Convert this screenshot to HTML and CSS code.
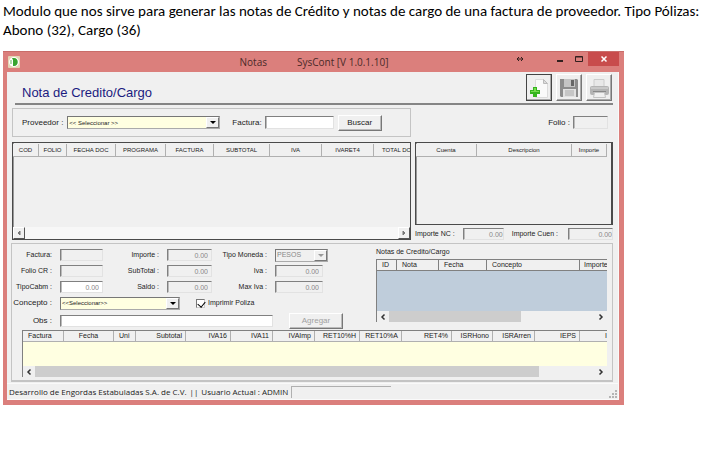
FILE: index.html
```html
<!DOCTYPE html>
<html lang="es">
<head>
<meta charset="utf-8">
<title>Notas - SysCont</title>
<link rel="stylesheet" href="styles.css">
</head>
<body>
<p class="intro">Modulo que nos sirve para generar las notas de Crédito y notas de cargo de una factura de proveedor. Tipo Pólizas: Abono (32), Cargo (36)</p>

<main class="window">
  <header class="titlebar">
    <svg class="app-icon" viewBox="0 0 12 12" aria-hidden="true"><rect width="12" height="12" rx="1" fill="#e5d5b5"/><circle cx="6" cy="6" r="5" fill="#fff"/><path d="M4 2h2c5 0 5 8 0 8H5V4z" fill="#37a52f"/><path d="M3 4v4" stroke="#65b85c"/></svg>
    <span class="caption"><span>Notas</span><span>SysCont [V 1.0.1.10]</span></span>
    <svg class="resize-icon" viewBox="0 0 8 6" aria-hidden="true"><path d="M1 3h6M3 1L1 3l2 2M5 1l2 2-2 2" fill="none" stroke="#33201f"/></svg>
    <button class="win-btn" aria-label="Minimizar"><svg viewBox="0 0 8 8"><path d="M1 6h6" stroke="#33201f" stroke-width="2"/></svg></button>
    <button class="win-btn" aria-label="Maximizar"><svg viewBox="0 0 8 8"><path d="M.5 1.5h7v5h-7zM.5 2h7" fill="none" stroke="#33201f"/></svg></button>
    <button class="win-btn close" aria-label="Cerrar"><svg viewBox="0 0 8 8"><path d="M1.500 1.500l5 5M6.500 1.500l-5 5" stroke="#fff" stroke-width="1.500"/></svg></button>
  </header>

  <div class="client">
    <div class="heading">
      <h1>Nota de Credito/Cargo</h1>
      <div class="tools">
        <button class="tool active" aria-label="Nuevo"><svg viewBox="0 0 22 22"><path d="M7.500 2.500h8l4 4v14h-12z" fill="#fafafa" stroke="#dcdcdc"/><path d="M15.500 2.500v4h4z" fill="#ddd" stroke="#bbb"/><path d="M5 10h4v3h3v4H9v3H5v-3H2v-4h3z" fill="#35b51e"/><path d="M6 11h2v3h3v1H3v-1h3z" fill="#75dc4c"/></svg></button>
        <button class="tool" aria-label="Guardar"><svg viewBox="0 0 22 22"><path d="M2 2h17l1 1v17H3l-1-1z" fill="#8c8c8c"/><path d="M6 2h11v8H6z" fill="#c4c4c4"/><path d="M13 3h3v6h-3z" fill="#666"/><path d="M5 12h13v8H5z" fill="#e2e2e2"/><path d="M7 14h9M7 16h9M7 18h9" stroke="#aaa"/></svg></button>
        <button class="tool" aria-label="Imprimir"><svg viewBox="0 0 22 22"><path d="M6 2.500h10v7H6z" fill="#e8e8e8" stroke="#ccc"/><rect x="2" y="9" width="19" height="9" rx="2" fill="#b4b4b4"/><path d="M3 11h17" stroke="#ddd"/><path d="M5 14h13v1H5z" fill="#888"/><path d="M6.500 15.500h10l1 5h-12z" fill="#f0f0f0" stroke="#c4c4c4"/></svg></button>
      </div>
    </div>

    <div class="search-row">
      <form class="search">
        <label for="prov">Proveedor :</label>
        <span class="combo yellow prov"><select id="prov"><option>&lt;&lt; Seleccionar &gt;&gt;</option></select></span>
        <label for="fact">Factura:</label>
        <input class="field white" id="fact" type="text">
        <button class="btn" type="button">Buscar</button>
      </form>
      <div class="folio">
        <label for="folio">Folio :</label>
        <input class="field" id="folio" type="text">
      </div>
    </div>

    <div class="grids">
      <section class="grid-box docs">
        <table class="caps">
          <colgroup><col class="w26"><col class="w28"><col class="w49"><col class="w50"><col class="w48"><col class="w56"><col class="w52"><col class="w52"><col></colgroup>
          <thead><tr><th>COD</th><th>FOLIO</th><th>FECHA DOC</th><th>PROGRAMA</th><th>FACTURA</th><th>SUBTOTAL</th><th>IVA</th><th>IVARET4</th><th class="cut">TOTAL DO</th></tr></thead>
        </table>
        <div class="scroll classic"><button type="button" aria-label="Izquierda"><svg viewBox="0 0 6 6"><path d="M4 1L2 3l2 2z" fill="#777" stroke="#777"/></svg></button><button type="button" aria-label="Derecha"><svg viewBox="0 0 6 6"><path d="M2 1l2 2-2 2z" fill="#777" stroke="#777"/></svg></button></div>
      </section>
      <section class="accounts">
        <div class="grid-box acc">
          <table class="caps">
            <colgroup><col class="w61"><col><col class="w35"></colgroup>
            <thead><tr><th>Cuenta</th><th>Descripcion</th><th>Importe</th></tr></thead>
          </table>
        </div>
        <div class="totals">
          <label for="inc">Importe NC :</label><input class="field" id="inc" type="text" value="0.00">
          <label for="icu">Importe Cuen :</label><input class="field" id="icu" type="text" value="0.00">
        </div>
      </section>
    </div>

    <section class="detail">
      <div class="detail-top">
        <form class="fields">
          <label for="f1">Factura:</label><input class="field" id="f1" type="text">
          <label for="f2">Importe :</label><input class="field" id="f2" type="text" value="0.00">
          <label for="f3">Tipo Moneda :</label><span class="combo muted"><select id="f3"><option>PESOS</option></select></span>
          <label for="f4">Folio CR :</label><input class="field" id="f4" type="text">
          <label for="f5">SubTotal :</label><input class="field" id="f5" type="text" value="0.00">
          <label for="f6">Iva :</label><input class="field short" id="f6" type="text" value="0.00">
          <label for="f7">TipoCabm :</label><input class="field white" id="f7" type="text" value="0.00">
          <label for="f8">Saldo :</label><input class="field" id="f8" type="text" value="0.00">
          <label for="f9">Max Iva :</label><input class="field short" id="f9" type="text" value="0.00">
          <label class="big" for="con">Concepto :</label>
          <div class="wide">
            <span class="combo yellow concept"><select id="con"><option>&lt;&lt;Seleccionar&gt;&gt;</option></select></span>
            <label class="check"><input type="checkbox" checked>Imprimir Poliza</label>
          </div>
          <label class="big" for="obs">Obs :</label>
          <div class="wide obs">
            <input class="field white" id="obs" type="text">
            <button class="btn off" type="button">Agregar</button>
          </div>
        </form>
        <section class="notes">
          <h2>Notas de Credito/Cargo</h2>
          <div class="list blue">
            <table>
              <colgroup><col class="w20"><col class="w42"><col class="w48"><col><col class="w27"></colgroup>
              <thead><tr><th>ID</th><th>Nota</th><th>Fecha</th><th>Concepto</th><th class="cut">Importe</th></tr></thead>
            </table>
            <div class="scroll flat"><svg viewBox="0 0 6 8"><path d="M4.500 1.500L2 4l2.500 2.500" fill="none" stroke="#333" stroke-width="1.500"/></svg><div class="track"><div class="thumb notes-thumb"></div></div><svg viewBox="0 0 6 8"><path d="M1.500 1.500L4 4 1.500 6.500" fill="none" stroke="#333" stroke-width="1.500"/></svg></div>
          </div>
        </section>
      </div>
      <div class="list cream">
        <table>
          <colgroup><col class="w41"><col class="w50"><col class="w22"><col class="w50"><col class="w45"><col class="w42"><col class="w42"><col class="w45"><col class="w42"><col class="w50"><col class="w41"><col class="w42"><col class="w45"><col></colgroup>
          <thead><tr><th class="l">Factura</th><th class="c">Fecha</th><th class="l">Uni</th><th>Subtotal</th><th>IVA16</th><th>IVA11</th><th>IVAImp</th><th>RET10%H</th><th>RET10%A</th><th>RET4%</th><th>ISRHono</th><th>ISRArren</th><th>IEPS</th><th>I</th></tr></thead>
        </table>
        <div class="scroll flat"><svg viewBox="0 0 6 8"><path d="M4.500 1.500L2 4l2.500 2.500" fill="none" stroke="#333" stroke-width="1.500"/></svg><div class="track"><div class="thumb"></div></div><svg viewBox="0 0 6 8"><path d="M1.500 1.500L4 4 1.500 6.500" fill="none" stroke="#333" stroke-width="1.500"/></svg></div>
      </div>
    </section>

    <footer class="status">
      <span>Desarrollo de Engordas Estabuladas S.A. de C.V.</span><span>||</span><span>Usuario Actual : ADMIN</span>
      <span class="slot"></span>
      <svg class="grip" viewBox="0 0 8 8" aria-hidden="true"><path d="M6 0h2v2H6zM3 3h2v2H3zM6 3h2v2H6zM0 6h2v2H0zM3 6h2v2H3zM6 6h2v2H6z" fill="#b4b4b4"/></svg>
    </footer>
  </div>
</main>
</body>
</html>
```
FILE: styles.css
```css
* { box-sizing: border-box; }
body {
  margin: 0;
  background: #fff;
  color: #222;
  font: 7px/10px "Liberation Sans", Arial, sans-serif;
}
button, input, select { font: inherit; color: inherit; margin: 0; padding: 0; border-radius: 0; }
svg { display: block; }

.intro {
  margin: 0;
  padding: 2px 0 0 3px;
  height: 51px;
  color: #000;
  font: 15px/19px Carlito, Calibri, Lato, sans-serif;
}

.window {
  max-width: 621px;
  margin-left: 3px;
  padding: 0 5px 5px 4px;
  background: #db7f7c;
  border: solid #c96d6a;
  border-width: 1px 0 0;
}
.titlebar { display: flex; align-items: flex-start; height: 20px; }
.app-icon { width: 12px; height: 12px; margin: 4px 0 0 1px; }
.caption {
  flex: 1;
  display: flex;
  justify-content: center;
  gap: 30px;
  padding-left: 92px;
  color: #4a2a29;
  font: 10px/20px "Open Sans", "Segoe UI", sans-serif;
}
.resize-icon { width: 8px; height: 6px; margin: 4px 26px 0 0; }
.win-btn { width: 19px; height: 14px; border: 0; background: none; display: grid; place-items: center; }
.win-btn svg { width: 8px; height: 8px; }
.win-btn.close { width: 31px; background: #c84c4c; }

.client { background: #f0f0f0; padding: 1px 5px 0; border: solid #fafafa; border-width: 0 1px 1px 0; }

.heading {
  display: flex;
  justify-content: space-between;
  align-items: flex-start;
  height: 32px;
  margin-left: 3px;
  padding: 1px 1px 0 7px;
  border-bottom: 2px solid #858585;
}
h1 { margin: 11px 0 0; color: #1b1b80; font-weight: 400; font-size: 13px; line-height: 16px; }
.tools { display: flex; gap: 4px; }
.tool {
  width: 26px;
  height: 27px;
  display: grid;
  place-items: center;
  background: #efefef;
  border: 1px solid;
  border-color: #fff #777 #777 #fff;
  box-shadow: inset -1px -1px #aaa;
}
.tool.active { border-color: #444; }
.tool svg { width: 22px; height: 22px; }

.search-row { display: flex; justify-content: space-between; margin-top: 3px; }
.search {
  display: flex;
  align-items: center;
  width: 399px;
  height: 29px;
  padding-left: 9px;
  border: 1px solid #c4c4c4;
}
.search label, .folio label { font-size: 8px; }
.search .prov { width: 153px; margin: 0 12px 0 4px; }
.search .white { width: 69px; margin: 0 4px 0 3px; }
.folio { display: flex; align-items: center; gap: 3px; padding-right: 5px; }
.folio .field { width: 35px; }

.field {
  min-width: 0;
  width: 100%;
  height: 13px;
  padding: 0 3px;
  background: #f0f0f0;
  border: 1px solid;
  border-color: #808080 #e2e2e2 #e2e2e2 #808080;
  box-shadow: inset 1px 0 #bbb;
  color: #888;
  text-align: right;
}
.field.white { background: #fff; }
.btn {
  width: 44px;
  height: 16px;
  font-size: 8px;
  background: #f0f0f0;
  border: 1px solid;
  border-color: #fff #777 #777 #fff;
  box-shadow: inset -1px -1px #bbb;
}
.btn.off { width: 54px; color: #a0a0a0; }

.combo {
  position: relative;
  display: block;
  height: 13px;
  border: 1px solid;
  border-color: #777 #aaa #aaa #777;
}
.combo select {
  display: block;
  width: 100%;
  height: 100%;
  padding-left: 1px;
  border: 0;
  appearance: none;
  background: transparent;
  font-size: 6px;
}
.combo::before {
  content: "";
  position: absolute;
  top: 0;
  right: 0;
  bottom: 0;
  width: 11px;
  background: #f0f0f0;
  border: 1px solid;
  border-color: #fff #777 #777 #fff;
}
.combo::after {
  content: "";
  position: absolute;
  top: 4px;
  right: 3px;
  border: solid transparent;
  border-width: 3px 3px 0;
  border-top-color: #000;
}
.combo.yellow { background: #ffffe1; }
.combo.muted { color: #888; }
.combo.muted select { font-size: 7px; }
.combo.muted::after { border-top-color: #999; }

table { width: 100%; table-layout: fixed; border-collapse: separate; border-spacing: 0; }
th {
  overflow: hidden;
  height: 11px;
  padding: 0 4px;
  background: #f0f0f0;
  border: solid #b0b0b0;
  border-width: 0 1px 1px 0;
  font-weight: 400;
  font-size: 7px;
  line-height: 10px;
  white-space: nowrap;
}
.w20 { width: 20px; } .w22 { width: 22px; } .w26 { width: 26px; } .w27 { width: 27px; }
.w28 { width: 28px; } .w35 { width: 35px; } .w41 { width: 41px; } .w42 { width: 42px; }
.w45 { width: 45px; } .w48 { width: 48px; } .w49 { width: 49px; } .w50 { width: 50px; }
.w52 { width: 52px; } .w56 { width: 56px; } .w61 { width: 61px; }

.grids { display: flex; gap: 4px; margin-top: 5px; }
.grid-box { border: 1px solid #4a4a4a; padding-top: 1px; box-shadow: inset 1px 0 #999; }
.docs { display: flex; flex-direction: column; justify-content: space-between; width: 399px; height: 98px; }
.caps th { height: 13px; padding: 0; font-size: 6px; text-align: center; }
.caps .cut { padding-left: 8px; text-align: left; border-right: 0; }
.accounts { flex: 1; }
.acc { height: 83px; padding-right: 4px; border-right-width: 2px; }
.totals { display: flex; align-items: center; margin-top: 3px; }
.totals .field { flex: none; width: 41px; height: 12px; margin-left: 8px; padding: 0; }
.totals label { white-space: nowrap; }
.totals #inc { margin-right: 8px; }
.totals #icu { width: 45px; margin-left: auto; margin-right: 0; }

.scroll { display: flex; align-items: center; height: 11px; background: #f0f0f0; }
.classic { justify-content: space-between; height: 12px; background: #f7f7f7; }
.classic button {
  width: 12px;
  height: 12px;
  display: grid;
  place-items: center;
  background: #f0f0f0;
  border: 1px solid;
  border-color: #fff #555 #555 #fff;
}
.classic svg { width: 6px; height: 6px; }
.flat svg { flex: none; width: 6px; height: 8px; margin: 0 3px; }
.track { flex: 1; height: 100%; }
.thumb { width: 90%; height: 100%; background: #cdcdcd; }
.notes-thumb { width: 64%; }

.detail { margin: 3px 0 0 -1px; height: 139px; padding: 5px 5px 0 0; border: 1px solid #c4c4c4; border-bottom-width: 2px; }
.detail-top { display: flex; justify-content: space-between; }
.fields {
  display: grid;
  grid-template-columns: 40px 43px 48px 45px 47px 53px;
  grid-template-rows: repeat(4, 12px) 16px;
  gap: 4px 8px;
  align-items: center;
}
.fields > label { text-align: right; white-space: nowrap; }
.fields > .big { font-size: 8px; }
.fields .short { width: 48px; }
.fields .field { height: 12px; }
.wide { grid-column: 2 / -1; display: flex; align-items: center; }
.concept { width: 120px; }
.obs { justify-content: space-between; margin-right: -15px; }
.obs .field { width: 213px; }
.check { display: flex; align-items: center; gap: 3px; margin-left: 16px; }
.check input {
  position: relative;
  width: 9px;
  height: 9px;
  appearance: none;
  background: #fff;
  border: 1px solid;
  border-color: #777 #ccc #ccc #777;
}
.check input:checked::after {
  content: "";
  position: absolute;
  top: 0;
  left: 2px;
  width: 4px;
  height: 6px;
  border: solid #000;
  border-width: 0 1px 1px 0;
  transform: rotate(40deg);
}

.notes { width: 231px; }
.notes h2 { margin: -2px 0 0; font-weight: 400; font-size: 7px; line-height: 10px; }
.notes .list { height: 63px; margin-top: 2px; }
.list {
  display: flex;
  flex-direction: column;
  justify-content: space-between;
  border: solid #808080;
  border-width: 1px 0 0 1px;
}
.blue { background: #bfcddb; }
.blue th { text-align: left; padding-left: 5px; border-color: #808080; }
.blue .cut { padding: 0 0 0 4px; border-right: 0; }
.cream { height: 47px; margin: 1px 0 0 10px; background: #ffffe1; }
.cream th { text-align: right; padding: 0 3px; }
.cream .l { text-align: left; padding-left: 5px; }
.cream .c { text-align: center; }
.cream th:last-child { border-right: 0; padding-right: 0; }

.status {
  display: flex;
  align-items: center;
  gap: 3px;
  height: 16px;
  margin: 1px -5px 0;
  padding-left: 2px;
  border-top: 1px solid #fafafa;
  font: 8px/12px "Open Sans", "Segoe UI", sans-serif;
}
.slot { width: 100px; height: 12px; border: solid #b0b0b0; border-width: 1px 0 0 1px; }
.grip { width: 8px; height: 8px; margin: 4px 1px 0 auto; }
```
